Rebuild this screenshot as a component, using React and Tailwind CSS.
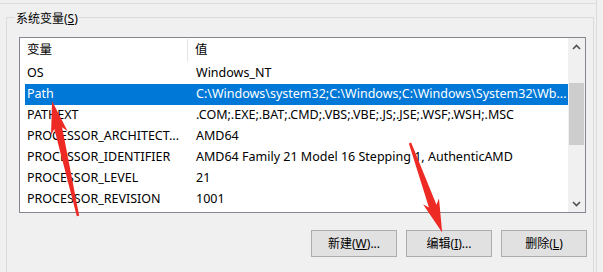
import React from 'react'

const rows = [
  ['OS', 'Windows_NT'],
  ['Path', 'C:\\Windows\\system32;C:\\Windows;C:\\Windows\\System32\\Wb...'],
  ['PATHEXT', '.COM;.EXE;.BAT;.CMD;.VBS;.VBE;.JS;.JSE;.WSF;.WSH;.MSC'],
  ['PROCESSOR_ARCHITECT...', 'AMD64'],
  ['PROCESSOR_IDENTIFIER', 'AMD64 Family 21 Model 16 Stepping 1, AuthenticAMD'],
  ['PROCESSOR_LEVEL', '21'],
  ['PROCESSOR_REVISION', '1001'],
]

const font = { fontFamily: '"Noto Sans", "Noto Sans CJK SC", sans-serif' }

const Chevron = ({ up }) => (
  <svg width="9" height="6" viewBox="0 0 9 6">
    <path d={up ? 'M1 5 L4.5 1.5 L8 5' : 'M1 1 L4.5 4.5 L8 1'} fill="none" stroke="#505050" strokeWidth="1.6" />
  </svg>
)

// red callout arrow, drawn pointing right then rotated
const Arrow = ({ x, y, len, angle }) => (
  <g transform={`translate(${x} ${y}) rotate(${angle})`}>
    <polygon
      points={`0,-1.2 ${len - 28},-4 ${len - 33},-8.5 ${len},0 ${len - 33},8.5 ${len - 28},4 0,1.2`}
      fill="#ee2a24"
    />
  </g>
)

const Btn = ({ label, k, tail }) => (
  <button className="w-[86px] h-[27px] bg-[#e1e1e1] border border-[#adadad] text-[12px] text-black flex items-center justify-center">
    {label}(<span className="underline">{k}</span>){tail}
  </button>
)

export default function App() {
  return (
    <div className="relative w-[603px] h-[272px] bg-[#f0f0f0] overflow-hidden text-black" style={font}>
      <div className="h-[4px] w-[597px] border-b border-r border-[#dcdcdc]" />
      <div className="w-[597px] h-[268px] border-r border-[#dcdcdc] pl-[6px] pt-[13px]">
        <div className="relative h-[300px] w-[588px] border border-[#dcdcdc]">
          <div className="absolute -top-[8px] left-[8px] px-[1px] bg-[#f0f0f0] text-[12px] leading-[18px]">
            系统变量(<span className="underline">S</span>)
          </div>

          <div className="ml-[12px] mt-[19px] w-[567px] h-[176px] border border-[#828790] bg-white flex">
            <div className="flex-1 pl-[5px] text-[12.5px]">
              <div className="h-[25px] flex items-center">
                <div className="w-[163px] pl-[2px] border-r border-[#e5e5e5] h-[23px] flex items-center">变量</div>
                <div className="pl-[7px]">值</div>
              </div>
              {rows.map(([k, v], i) => (
                <div
                  key={k}
                  className={`h-[21px] flex items-center whitespace-nowrap ${i === 1 ? 'bg-[#0078d7] text-white' : ''}`}
                >
                  <div className="w-[164px] pl-[2px]">{k}</div>
                  <div className="pl-[7px]">{v}</div>
                </div>
              ))}
            </div>
            <div className="w-[17px] flex flex-col bg-[#f0f0f0]">
              <div className="h-[17px] flex items-center justify-center">
                <Chevron up />
              </div>
              <div className="mt-[28px] mx-[1px] h-[62px] bg-[#cdcdcd]" />
              <div className="flex-1" />
              <div className="h-[17px] flex items-center justify-center">
                <Chevron />
              </div>
            </div>
          </div>

          <div className="flex justify-end gap-[9px] mt-[17px] pr-[6px]">
            <Btn label="新建" k="W" tail="..." />
            <Btn label="编辑" k="I" tail="..." />
            <Btn label="删除" k="L" tail="" />
          </div>
        </div>
      </div>

      <svg className="absolute inset-0 pointer-events-none" width="603" height="272">
        <Arrow x={78} y={216} len={118} angle={-102.7} />
        <Arrow x={410} y={143} len={95} angle={70.2} />
      </svg>
    </div>
  )
}
